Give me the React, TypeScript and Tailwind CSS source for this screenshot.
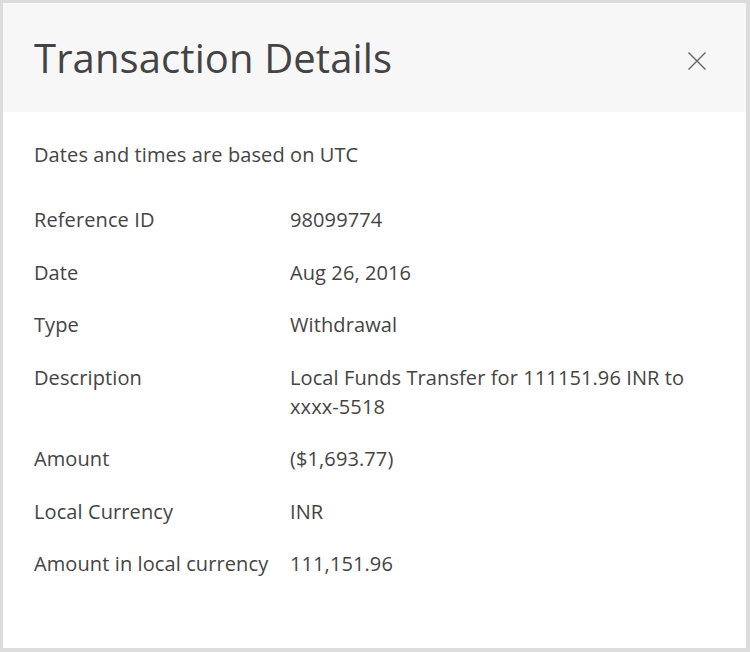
import React from "react";

const rows: { label: string; value: React.ReactNode }[] = [
  { label: "Reference ID", value: "98099774" },
  { label: "Date", value: "Aug 26, 2016" },
  { label: "Type", value: "Withdrawal" },
  {
    label: "Description",
    value: (
      <>
        Local Funds Transfer for 111151.96 INR to
        <br />
        xxxx-5518
      </>
    ),
  },
  { label: "Amount", value: "($1,693.77)" },
  { label: "Local Currency", value: "INR" },
  { label: "Amount in local currency", value: "111,151.96" },
];

export default function App() {
  return (
    <div
      className="w-[750px] h-[652px] bg-[#dcdcdc] pl-[3px] pt-[3px] pr-[4px] pb-[4px]"
      style={{ fontFamily: "'Open Sans', sans-serif" }}
    >
      <div className="h-full bg-white flex flex-col">
        <div className="h-[109px] bg-[#f7f7f7] flex items-center justify-between pl-[31px] pr-[40px]">
          <h1 className="text-[40px] leading-[48px] text-[#444] font-normal tracking-[0.1px]">
            Transaction Details
          </h1>
          <svg width="18" height="18" viewBox="0 0 18 18" className="text-[#666] mt-[6px]">
            <path d="M0.5 0.5 L17.5 17.5 M17.5 0.5 L0.5 17.5" stroke="currentColor" strokeWidth="1.4" />
          </svg>
        </div>
        <div className="pl-[31px] pt-[28px] text-[20px] leading-[29px] text-[#444] tracking-[0.1px]">
          <p>Dates and times are based on UTC</p>
          <div className="mt-[36px] flex flex-col gap-[23.5px]">
            {rows.map((r) => (
              <div key={r.label} className="flex">
                <div className="w-[256px] shrink-0">{r.label}</div>
                <div>{r.value}</div>
              </div>
            ))}
          </div>
        </div>
      </div>
    </div>
  );
}
